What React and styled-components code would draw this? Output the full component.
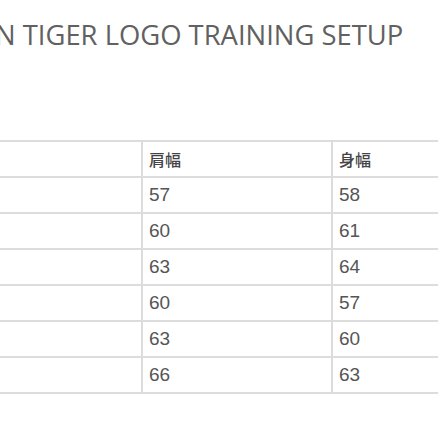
import React from "react";
import styled, { createGlobalStyle } from "styled-components";

const GlobalStyle = createGlobalStyle`
  html, body {
    margin: 0;
    padding: 0;
    background: #fff;
  }
`;

const rows = [
  ["", "57", "58"],
  ["", "60", "61"],
  ["", "63", "64"],
  ["", "60", "57"],
  ["", "63", "60"],
  ["", "66", "63"],
];

const Page = styled.div`
  width: 438px;
  height: 438px;
  overflow: hidden;
  background: #fff;
`;

const Title = styled.h1`
  margin: 0 0 0 -5px;
  padding-top: 16px;
  font-family: "Open Sans", "Liberation Sans", sans-serif;
  font-weight: 400;
  font-size: 27.4px;
  line-height: 38px;
  color: #616161;
  white-space: nowrap;
`;

const Table = styled.table`
  margin: 86px 0 0 -59px;
  border-collapse: collapse;
  table-layout: fixed;
  width: 600px;
  font-family: "Liberation Sans", "Noto Sans CJK JP", sans-serif;
  color: #555;
`;

const Cell = styled.td`
  height: 34px;
  padding: 0 6px;
  border: 2px solid #dcdcdc;
  vertical-align: middle;
  font-weight: ${(p) => (p.$head ? 500 : 400)};
  font-size: ${(p) => (p.$head ? "16px" : "19px")};
  color: ${(p) => (p.$head ? "#444" : "#555")};
`;

export default function App() {
  return (
    <Page>
      <GlobalStyle />
      <Title>N TIGER LOGO TRAINING SETUP</Title>
      <Table>
        <colgroup>
          <col style={{ width: 200 }} />
          <col style={{ width: 190 }} />
          <col style={{ width: 210 }} />
        </colgroup>
        <tbody>
          <tr>
            <Cell $head></Cell>
            <Cell $head>肩幅</Cell>
            <Cell $head>身幅</Cell>
          </tr>
          {rows.map((r, i) => (
            <tr key={i}>
              {r.map((c, j) => (
                <Cell key={j}>{c}</Cell>
              ))}
            </tr>
          ))}
        </tbody>
      </Table>
    </Page>
  );
}
